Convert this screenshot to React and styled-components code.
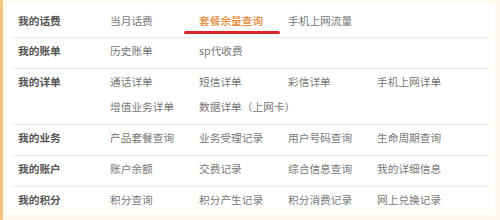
import styled, { createGlobalStyle } from "styled-components";

const GlobalStyle = createGlobalStyle`
  html, body {
    margin: 0;
    padding: 0;
    background: #fffaea;
  }
  body {
    font-family: "Noto Sans CJK SC", "Noto Sans", sans-serif;
  }
`;

const groups = [
  { label: "我的话费", items: ["当月话费", "套餐余量查询", "手机上网流量"], active: 1 },
  { label: "我的账单", items: ["历史账单", "sp代收费"] },
  {
    label: "我的详单",
    items: ["通话详单", "短信详单", "彩信详单", "手机上网详单", "增值业务详单", "数据详单（上网卡）"],
  },
  { label: "我的业务", items: ["产品套餐查询", "业务受理记录", "用户号码查询", "生命周期查询"] },
  { label: "我的账户", items: ["账户余额", "交费记录", "综合信息查询", "我的详细信息"] },
  { label: "我的积分", items: ["积分查询", "积分产生记录", "积分消费记录", "网上兑换记录"] },
];

const App = () => {
  return (
    <>
      <GlobalStyle />
      <Frame>
        <Panel>
          {groups.map((g, i) => (
            <Row key={g.label} $first={i === 0} $last={i === groups.length - 1}>
              <Label>{g.label}</Label>
              <Items>
                {g.items.map((item, j) => (
                  <Item key={item} $active={g.active === j}>
                    {item}
                  </Item>
                ))}
              </Items>
            </Row>
          ))}
        </Panel>
      </Frame>
    </>
  );
};
export default App;

const Frame = styled.div`
  width: 500px;
  height: 220px;
  box-sizing: border-box;
  background: #fffaea;
  border-left: 3px solid #f2c47f;
  padding: 3px 5px 5px 3px;
`;

const Panel = styled.div`
  background: #ffffff;
  height: 100%;
  box-sizing: border-box;
  padding: 2px 3px 0;
`;

const Row = styled.div`
  display: flex;
  margin: 0 3px;
  padding: ${(p) => (p.$first ? "3px 0 4px" : "0 0 5px")};
  border-bottom: ${(p) => (p.$last ? "none" : "1px dotted #dcdcdc")};
`;

const Label = styled.div`
  width: 98px;
  flex-shrink: 0;
  box-sizing: border-box;
  padding-left: 6px;
  font-size: 10.7px;
  line-height: 25px;
  font-weight: bold;
  color: #555555;
`;

const Items = styled.div`
  display: grid;
  grid-template-columns: repeat(4, 89px);
`;

const Item = styled.div`
  position: relative;
  font-size: 10.7px;
  line-height: 25px;
  white-space: nowrap;
  color: ${(p) => (p.$active ? "#e38b35" : "#777777")};
  font-weight: ${(p) => (p.$active ? 500 : "normal")};
  cursor: pointer;

  &::after {
    content: "";
    display: ${(p) => (p.$active ? "block" : "none")};
    position: absolute;
    left: -15px;
    width: 96px;
    bottom: -1px;
    height: 3px;
    border-radius: 2px;
    background: #d8232a;
  }
`;
